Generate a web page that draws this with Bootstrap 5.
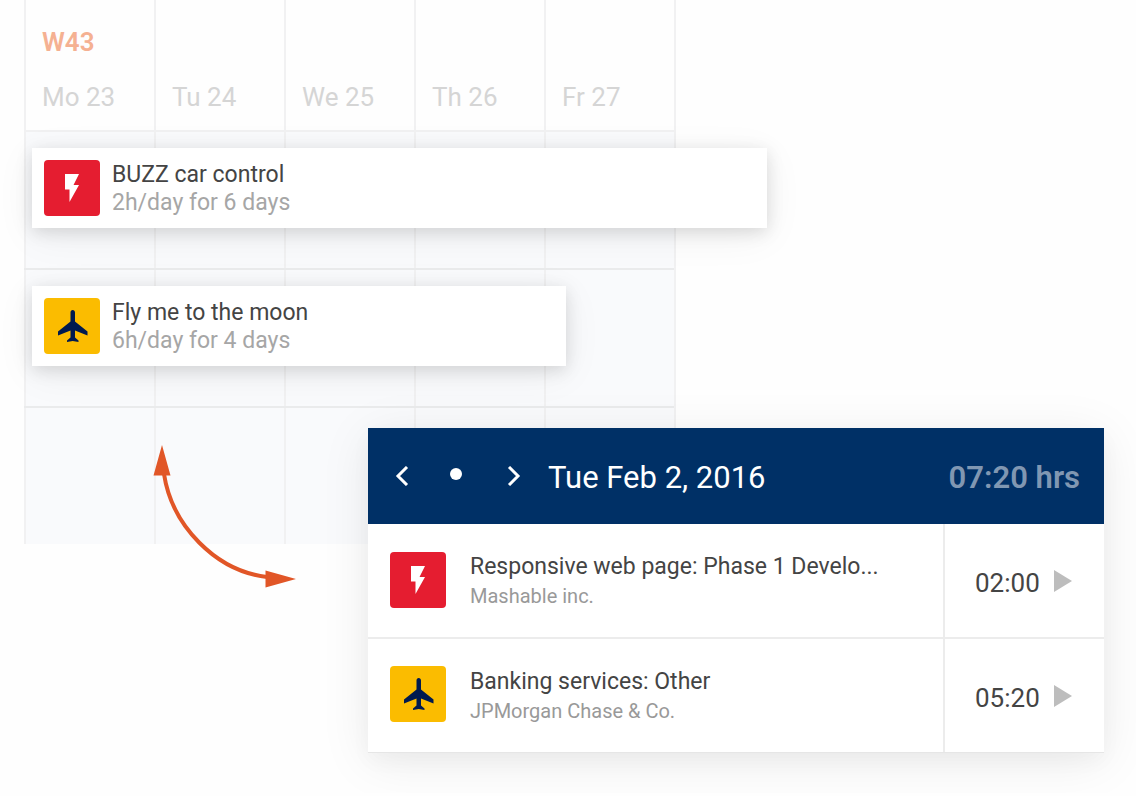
<!DOCTYPE html>
<html lang="en">
<head>
<meta charset="utf-8">
<meta name="viewport" content="width=device-width, initial-scale=1">
<title>Schedule and timesheet</title>
<link href="https://cdn.jsdelivr.net/npm/bootstrap@5.3.0/dist/css/bootstrap.min.css" rel="stylesheet">
<style>
  body { font-family: Roboto, "Liberation Sans", sans-serif; color: #444; background: #fefefe; overflow-x: hidden; }

  /* The calendar and the timesheet share the middle column, where they overlap */
  .stage { display: grid; grid-template-columns: 344fr 308fr 428fr; grid-template-rows: 428px auto; padding: 0 32px 40px 24px; }
  .planner { grid-area: 1 / 1 / 3 / 3; align-self: start; border-right: 2px solid #f1f1f2; }
  .timesheet { grid-area: 2 / 2 / 3 / 4; align-self: start; background: #fff; box-shadow: 0 8px 48px rgba(0,0,0,.08), 0 8px 20px rgba(0,0,0,.03); }

  .week-grid { display: grid; grid-template-columns: repeat(5, minmax(0, 1fr)); }
  .slot { border-left: 2px solid #f1f1f2; }
  .week-head .slot { height: 130px; padding: 0 16px 15px; color: #d5d5d5; font-size: 26px; line-height: 36px; }
  .week-no { color: #f5b192; font-weight: 600; line-height: 36px; margin-bottom: 19px; }
  .lane { background: #f9fafc; min-height: 138px; border-top: 2px solid #f1f1f2; }
  .lane + .lane { border-top-color: #eaebec; }
  .lane .slot { grid-row: 1; }
  .slot:nth-child(1) { grid-column: 1; }
  .slot:nth-child(2) { grid-column: 2; }
  .slot:nth-child(3) { grid-column: 3; }
  .slot:nth-child(4) { grid-column: 4; }
  .slot:nth-child(5) { grid-column: 5; }
  .assignment { grid-area: 1 / 1 / 2 / -1; align-self: start; height: 80px; margin: 16px 0 0 8px; padding: 12px; background: #fff; z-index: 1;
    box-shadow: 0 4px 16px rgba(0,0,0,.13), 0 8px 40px rgba(0,0,0,.06); font-size: 23px; line-height: 28px; }
  .assignment-text { padding: 1px 0 0 12px; }
  .soft { color: #a6a6a6; }

  .tile { width: 56px; height: 56px; border-radius: 4px; flex: none; }
  .tile svg { display: block; }
  .tile-red { background: #e51d30; }
  .tile-yellow { background: #fbbc00; }

  .sheet-head { background: #003066; color: #fff; height: 96px; padding: 0 24px 0 20px; font-size: 31px; line-height: 40px; }
  .sheet-head .caption-text { padding-top: 4px; }
  .step { width: 28px; height: 40px; padding: 0; border: 0; background: none; color: inherit; }
  .step svg { display: block; margin: auto; }
  .day-nav { width: 140px; margin-right: 20px; gap: 26px; }
  .day-nav .step:last-child { margin-left: 4px; }
  .total { color: #8097b2; font-weight: 600; }
  .entry { min-height: 115px; padding-left: 22px; border-bottom: 2px solid #ececec; }
  .entry:last-child { min-height: 114px; border-bottom: 1px solid #e6e6e6; }
  .entry .tile { margin-top: 28px; }
  .entry + .entry .tile { margin-top: 27px; }
  .entry-name { font-size: 23px; line-height: 30px; }
  .entry-client { font-size: 20px; line-height: 28px; color: #999; }
  .entry-time { width: 161px; padding: 4px 0 0 30px; border-left: 2px solid #ececec; font-size: 26px; line-height: 32px; }
  .entry-time .step { height: 32px; padding-bottom: 4px; }
  .entry-time .clock { width: 74px; }

  .connector { position: absolute; left: 152px; top: 444px; z-index: 1; }
</style>
</head>
<body>
<main class="stage position-relative">

  <section class="planner" aria-label="Week 43">
    <div class="week-grid week-head">
      <div class="slot d-flex flex-column justify-content-end text-nowrap"><div class="week-no">W43</div><div>Mo 23</div></div>
      <div class="slot d-flex align-items-end text-nowrap">Tu 24</div>
      <div class="slot d-flex align-items-end text-nowrap">We 25</div>
      <div class="slot d-flex align-items-end text-nowrap">Th 26</div>
      <div class="slot d-flex align-items-end text-nowrap">Fr 27</div>
    </div>
    <div class="week-grid lane">
      <div class="slot"></div><div class="slot"></div><div class="slot"></div><div class="slot"></div><div class="slot"></div>
      <article class="assignment d-flex" style="width:113%">
        <div class="tile tile-red"><svg width="56" height="56" viewBox="0 0 56 56" aria-hidden="true"><path fill="#fff" d="M21 14H35L29.500 25H35L25.500 42V29.500H21Z"/></svg></div>
        <div class="assignment-text text-nowrap"><div>BUZZ car control</div><div class="soft">2h/day for 6 days</div></div>
      </article>
    </div>
    <div class="week-grid lane">
      <div class="slot"></div><div class="slot"></div><div class="slot"></div><div class="slot"></div><div class="slot"></div>
      <article class="assignment d-flex" style="width:82.200%">
        <div class="tile tile-yellow"><svg width="56" height="56" viewBox="0 0 56 56" aria-hidden="true"><path fill="#001a4f" d="M28.700 12C30 12 31 13 31 14.500V23.500L43.500 33.500V37.500L31 32.500V39.500L34.500 42.500V44L28.700 43L23 44V42.500L26.500 39.500V32.500L14 37.500V33.500L26.500 23.500V14.500C26.500 13 27.400 12 28.700 12Z"/></svg></div>
        <div class="assignment-text text-nowrap"><div>Fly me to the moon</div><div class="soft">6h/day for 4 days</div></div>
      </article>
    </div>
    <div class="week-grid lane">
      <div class="slot"></div><div class="slot"></div><div class="slot"></div><div class="slot"></div><div class="slot"></div>
    </div>
  </section>

  <svg class="connector" width="148" height="148" viewBox="0 0 148 148" aria-hidden="true">
    <path fill="none" stroke="#e15627" stroke-width="4" d="M12 30C20 82 64 127 115 133"/>
    <path fill="#e15627" d="M10 1L18.500 31.500H1.500ZM144 135L113.500 126.500V143.500Z"/>
  </svg>

  <section class="timesheet" aria-label="Timesheet">
    <header class="sheet-head d-flex align-items-center text-nowrap">
      <div class="day-nav d-flex">
        <button class="step" type="button" aria-label="Previous day"><svg width="14" height="20" viewBox="0 0 14 20"><path fill="none" stroke="#fff" stroke-width="3" d="M12 1L3 10L12 19"/></svg></button>
        <button class="step" type="button" aria-label="Today"><svg width="12" height="16" viewBox="0 0 12 16"><circle cx="6" cy="6" r="6" fill="#fff"/></svg></button>
        <button class="step" type="button" aria-label="Next day"><svg width="14" height="20" viewBox="0 0 14 20"><path fill="none" stroke="#fff" stroke-width="3" d="M2 1L11 10L2 19"/></svg></button>
      </div>
      <div class="caption-text">Tue Feb 2, 2016</div>
      <div class="caption-text total ms-auto">07:20 hrs</div>
    </header>
    <div class="entry d-flex">
      <div class="tile tile-red"><svg width="56" height="56" viewBox="0 0 56 56" aria-hidden="true"><path fill="#fff" d="M21 14H35L29.500 25H35L25.500 42V29.500H21Z"/></svg></div>
      <div class="flex-grow-1 align-self-center ps-4 text-nowrap"><div class="entry-name">Responsive web page: Phase 1 Develo...</div><div class="entry-client">Mashable inc.</div></div>
      <div class="entry-time d-flex align-items-center"><span class="clock">02:00</span><button class="step" type="button" aria-label="Start timer"><svg width="18" height="22" viewBox="0 0 18 22"><path fill="#bdbdbd" d="M0 0L18 11L0 22Z"/></svg></button></div>
    </div>
    <div class="entry d-flex">
      <div class="tile tile-yellow"><svg width="56" height="56" viewBox="0 0 56 56" aria-hidden="true"><path fill="#001a4f" d="M28.700 12C30 12 31 13 31 14.500V23.500L43.500 33.500V37.500L31 32.500V39.500L34.500 42.500V44L28.700 43L23 44V42.500L26.500 39.500V32.500L14 37.500V33.500L26.500 23.500V14.500C26.500 13 27.400 12 28.700 12Z"/></svg></div>
      <div class="flex-grow-1 align-self-center ps-4 text-nowrap"><div class="entry-name">Banking services: Other</div><div class="entry-client">JPMorgan Chase &amp; Co.</div></div>
      <div class="entry-time d-flex align-items-center"><span class="clock">05:20</span><button class="step" type="button" aria-label="Start timer"><svg width="18" height="22" viewBox="0 0 18 22"><path fill="#bdbdbd" d="M0 0L18 11L0 22Z"/></svg></button></div>
    </div>
  </section>
</main>
<script src="https://cdn.jsdelivr.net/npm/bootstrap@5.3.0/dist/js/bootstrap.bundle.min.js"></script>
</body>
</html>
